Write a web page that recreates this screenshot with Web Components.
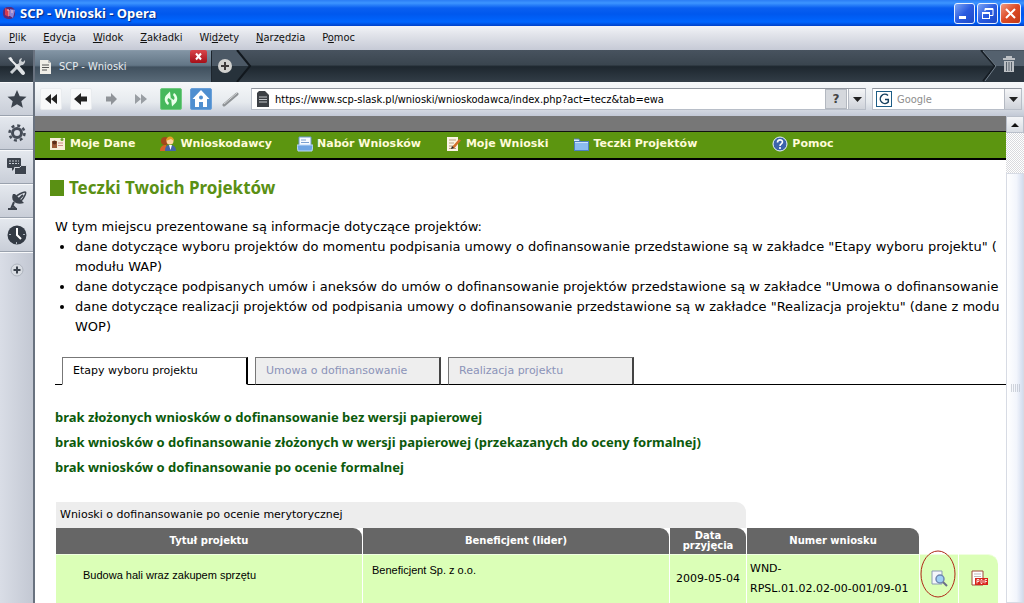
<!DOCTYPE html>
<html lang="pl">
<head>
<meta charset="utf-8">
<title>SCP - Wnioski</title>
<style>
html, body { margin: 0; height: 100%; overflow: hidden; }
body { font: 11px/16px "DejaVu Sans Condensed", "Noto Sans", sans-serif; color: #000; }
</style>
</head>
<body>
<browser-window>
  <title-bar slot="title">SCP - Wnioski - Opera</title-bar>
  <menu-bar slot="menu"></menu-bar>
  <side-panel slot="side"></side-panel>
  <tab-strip slot="tabs">SCP - Wnioski</tab-strip>
  <address-bar slot="address" url="https://www.scp-slask.pl/wnioski/wnioskodawca/index.php?act=tecz&amp;tab=ewa"></address-bar>
  <site-nav></site-nav>
  <projects-page>
    <page-tabs></page-tabs>
    <status-notes></status-notes>
    <project-table></project-table>
  </projects-page>
</browser-window>

<script>
const define = (name, css, html) => {
  const tpl = document.createElement('template');
  customElements.define(name, class extends HTMLElement {
    constructor() {
      super();
      tpl.innerHTML = `<style>:host,*{box-sizing:border-box}svg{display:block}button{font:inherit;margin:0}${css}</style>` + html(this);
      this.attachShadow({ mode: 'open' }).append(tpl.content.cloneNode(true));
    }
  });
};

define('browser-window', `
:host { display: flex; flex-direction: column; height: 100vh; overflow: hidden; background: #fff; }
.work { flex: 1; display: grid; grid-template-columns: 35px minmax(0, 1fr); min-height: 0; }
.main { display: flex; flex-direction: column; min-height: 0; min-width: 0; }
.view { flex: 1; display: flex; min-height: 0; }
.doc { flex: 1; min-width: 0; overflow: hidden; border-top: 15px solid #777; }
`, () => `
<slot name="title"></slot><slot name="menu"></slot>
<div class="work"><slot name="side"></slot>
<div class="main"><slot name="tabs"></slot><slot name="address"></slot>
<div class="view"><div class="doc"><slot></slot></div><scroll-rail></scroll-rail></div></div></div>`);

define('title-bar', `
:host { display: flex; align-items: center; gap: 3px; height: 26px; padding: 0 3px 0 2px; color: #fff;
  background: linear-gradient(#2b7df5 0, #3d95ff 3px, #0a5ff0 8px, #0058ee 14px, #0066ff 22px, #0040c8 26px);
  font: bold 13px/16px "Noto Sans", sans-serif; text-shadow: 1px 1px 1px #0a2a80; }
.name { flex: 1; }
.ctl { display: flex; gap: 2px; }
button { width: 21px; height: 21px; padding: 0; border: 1px solid #e8f0ff; border-radius: 3px; background: linear-gradient(135deg, #7ba4f5, #2a5be0 50%, #1c49c8); }
button.x { background: linear-gradient(135deg, #f09a80, #dd4a25 50%, #c03a18); }
button svg { margin: auto; }
`, () => `
<svg width="15" height="16" viewBox="0 0 15 16"><rect x="1" y="2" width="12" height="12" rx="5" fill="#5b2a78"/><path d="M3 3l4 2v7l-4-2z" fill="#d43a4f"/><path d="M8 4l5 1-2 8-3-2z" fill="#8e86d8"/><path d="M5 5h2v6M10 5v3" stroke="#f3c5d4" fill="none"/></svg>
<span class="name"><slot></slot></span>
<div class="ctl">
<button aria-label="Minimalizuj"><svg width="15" height="15"><rect x="2" y="10" width="7" height="3" fill="#fff"/></svg></button>
<button aria-label="Przywróć"><svg width="15" height="15" fill="none" stroke="#fff"><path d="M5 5V2.500h8v7h-3"/><path d="M5 3h8" stroke-width="2"/><rect x="2.500" y="6.500" width="7" height="6"/><path d="M2 7h8" stroke-width="2"/></svg></button>
<button class="x" aria-label="Zamknij"><svg width="15" height="15"><path d="M3 3l9 9M12 3l-9 9" stroke="#fff" stroke-width="2"/></svg></button>
</div>`);

define('menu-bar', `
:host { display: flex; align-items: center; gap: 17px; height: 24px; padding: 0 9px; background: linear-gradient(#f2f4f8, #e4e6ec 30%, #c6cad6); }
button { border: 0; padding: 0; background: none; color: #111; }
`, () => [['', 'P', 'lik'], ['', 'E', 'dycja'], ['', 'W', 'idok'], ['', 'Z', 'akładki'], ['Wi', 'd', 'żety'], ['', 'N', 'arzędzia'], ['P', 'o', 'moc']]
  .map(([a, u, b]) => `<button>${a}<u>${u}</u>${b}</button>`).join(''));

define('side-panel', `
:host { display: flex; flex-direction: column; background: linear-gradient(90deg, #d9dde6, #c3c8d3); border-right: 2px solid #69727f; }
button { height: 34px; width: 100%; padding: 0; border: 0; border-top: 1px solid #f8f9fb; border-bottom: 1px solid #9aa2ae; background: linear-gradient(#e4e8ee, #c9ced8); }
button.dark { height: 32px; border: 0; background: linear-gradient(#54606d, #3b4651 48%, #1f2830 52%, #36414b); }
button.plain { border-bottom: 0; background: none; }
svg { margin: auto; }
`, () => {
  const ic = s => `<svg width="20" height="20" viewBox="0 0 20 20">${s}</svg>`;
  return `
<button class="dark" aria-label="Narzędzia">${ic('<path d="M4 17L14 7" stroke="#ccd0d4" stroke-width="3"/><path d="M13 8a3.500 3.500 0 0 1 2-6l-1 3 2 1 2-2a4 4 0 0 1-5 5z" fill="#ccd0d4"/><path d="M3 3l7 7" stroke="#eceef0" stroke-width="2"/><path d="M10 10l6 7" stroke="#dfe2e5" stroke-width="4" stroke-linecap="round"/><path d="M1 2l3-1 2 3-2 1z" fill="#eceef0"/>')}</button>
<button aria-label="Zakładki">${ic('<path d="M10 1l2.700 6.200 6.800.6-5.200 4.400 1.600 6.600L10 15.300 4.100 18.800l1.600-6.600L.5 7.800l6.800-.6z" fill="#3c434d"/>')}</button>
<button aria-label="Widżety">${ic('<circle cx="10" cy="10" r="4.500" fill="none" stroke="#454c57" stroke-width="3"/><circle cx="10" cy="10" r="7.500" fill="none" stroke="#454c57" stroke-width="2.500" stroke-dasharray="3 2.890"/>')}</button>
<button aria-label="Notatki">${ic('<rect x="0" y="1" width="14" height="10" rx="1" fill="#3c434d"/><path d="M2 4h10M2 6.500h10" stroke="#c6ccd4" stroke-dasharray="2 1"/><path d="M5 11h3l-3 3z" fill="#3c434d"/><path d="M7.500 10.500h5l2-2h5v9h-12z" fill="#3c434d" stroke="#d5d9e0"/>')}</button>
<button aria-label="Transfery">${ic('<path d="M6 3c-3 6 3 12 11 9L8 3z" fill="#3c434d"/><path d="M9 6c1-2 7-5 9-5s-1 6-4 9z" fill="none" stroke="#3c434d" stroke-width="1.500"/><path d="M11 9l5-5" stroke="#3c434d" stroke-width="2"/><path d="M7 11l-3 7M1 18h9M5 14l4 4" stroke="#3c434d" stroke-width="2"/>')}</button>
<button aria-label="Historia">${ic('<circle cx="10" cy="10" r="9.500" fill="#343b45"/><path d="M10 3v7l4 4" stroke="#fff" stroke-width="2" fill="none"/><g fill="#aeb5be"><rect x="2" y="9" width="2" height="1"/><rect x="16" y="9" width="2" height="1"/><rect x="9" y="17" width="1" height="2"/></g>')}</button>
<button class="plain" aria-label="Dodaj panel">${ic('<circle cx="10" cy="10" r="6" fill="#d8dce2" stroke="#aeb4be"/><path d="M10 6.500v7M6.500 10h7" stroke="#3c434d" stroke-width="2"/>')}</button>`;
});

define('tab-strip', `
:host { display: flex; height: 32px; background: linear-gradient(#48535f, #3a454f 46%, #1e272f 52%, #323d47); }
.tab { position: relative; display: flex; align-items: center; gap: 7px; width: 177px; padding: 0 4px; color: #e8ecf0; border-right: 1px solid #1c242c; border-top: 1px solid #8899a8;
  background: linear-gradient(#8294a4, #637686 46%, #40505e 52%, #5a6b79); }
.close { position: absolute; top: -1px; right: 4px; width: 17px; height: 13px; padding: 0; border: 0; border-radius: 2px; background: linear-gradient(#d9464b, #a50f18); }
.close svg { margin: auto; }
.new, .bin { padding: 0; border: 0; background: none; }
.bin { margin-left: auto; }
`, () => `
<div class="tab"><svg width="13" height="16"><path d="M1 1h8l3 3v11H1z" fill="#f0eee8"/><path d="M9 1v3h3" fill="#bbb"/><path d="M3 6h7M3 8.500h7M3 11h5" stroke="#555"/></svg><slot></slot>
<button class="close" aria-label="Zamknij kartę"><svg width="9" height="9"><path d="M2 1.500l5 6M7 1.500l-5 6" stroke="#fff" stroke-width="2"/></svg></button></div>
<button class="new" aria-label="Nowa karta"><svg width="40" height="32"><path d="M0 0h25l13 16-13 16H0z" fill="#4b5865"/><path d="M0 16h38L25 32H0z" fill="#27323b"/><path d="M25 0l13 16-13 16" fill="none" stroke="#12181e" stroke-width="2"/><circle cx="13" cy="16" r="7" fill="#d2d2d0"/><path d="M13 12v8M9 16h8" stroke="#3d3a3a" stroke-width="2"/></svg></button>
<button class="bin" aria-label="Kosz"><svg width="44" height="32"><path d="M2 1h42v15H15z" fill="#54616e"/><path d="M15 16h29v16H3z" fill="#2c3741"/><path d="M1 0l14 16L3 31" fill="none" stroke="#161d24" stroke-width="2"/><path d="M3 1l13 15L5 31" fill="none" stroke="#75828e"/><path d="M23 8h12v2H23zM26 6h6v2h-6zM24 11h10v11H24z" fill="#bcc0c4"/><path d="M26.500 12v9M29 12v9M31.500 12v9" stroke="#59636d"/></svg></button>`);

define('address-bar', `
:host { display: flex; align-items: center; height: 34px; padding: 0 2px 0 5px; background: linear-gradient(#f6f8fa, #e6eaee 60%, #c3c9d6); }
.tool { width: 22px; height: 22px; padding: 0; border: 1px solid #e9ecef; border-radius: 2px; background: #f8f9fa; flex: none; }
.tool.flat { background: none; border-color: transparent; }
.tool.reload { background: #46b85c; border-color: #71c981; }
.tool.home { background: #4f8fd0; border-color: #6aa0d8; }
.tools { display: flex; gap: 8px; margin-right: 9px; }
.tool svg { margin: auto; }
.field { display: flex; align-items: center; height: 22px; background: #fff; border: 1px solid #b8bec8; border-top-color: #8f959e; min-width: 0; }
.url { flex: 1; padding-left: 5px; margin-right: 6px; }
.find { width: 150px; padding-left: 3px; flex: none; }
input { flex: 1; min-width: 0; border: 0; padding: 0 0 0 6px; background: none; font: inherit; color: #000; height: 20px; outline: 0; }
.find input { padding-left: 4px; }
input::placeholder { color: #8d8d8d; opacity: 1; }
.drop { width: 17px; height: 20px; padding: 0; border: 0; border-left: 1px solid #b4b9c2; background: linear-gradient(#f4f5f7, #cfd3da); }
.help { width: 22px; height: 20px; margin-right: 1px; padding: 0; border: 1px solid #b3b8c0; background: #d5d8dd; font: bold 12px/16px "DejaVu Sans", sans-serif; color: #444; text-align: center; }
.drop svg { margin: auto; }
`, host => {
  const ic = s => `<svg width="18" height="18" viewBox="0 0 18 18">${s}</svg>`;
  const arrow = '<svg width="9" height="5"><path d="M0 0h9L4.500 5z" fill="#222"/></svg>';
  return `
<div class="tools">
<button class="tool" aria-label="Początek">${ic('<path d="M9 4v10L3 9zM15 4v10L9 9z" fill="#222"/>')}</button>
<button class="tool" aria-label="Wstecz">${ic('<path d="M9 3v3.500h6v5H9V15L2 9z" fill="#222"/>')}</button>
<button class="tool flat" aria-label="Dalej">${ic('<path d="M9 3v3.500H4v5h5V15l6-6z" fill="#8f9398"/>')}</button>
<button class="tool flat" aria-label="Do przodu">${ic('<path d="M3 4v10l6-5zM9 4v10l6-5z" fill="#999ea3"/>')}</button>
<button class="tool reload" aria-label="Odśwież">${ic('<path d="M8 1.500L4 5.500C1.500 9 3 13 6 15l1-2C5 11 5 9 6.500 8L9 10z" fill="#eaffea"/><path d="M10 16.500l4-4c2.500-3.500 1-7.500-2-9.500l-1 2c2 2 2 4 .5 5L9 8z" fill="#eaffea"/>')}</button>
<button class="tool home" aria-label="Strona startowa">${ic('<path d="M9 0l8.500 9H15v8h-4v-5H7v5H3V9H.5z" fill="#fff"/><circle cx="9" cy="7.500" r="2" fill="#4f8fd0"/>')}</button>
<button class="tool flat" aria-label="Różdżka">${ic('<path d="M2 15L15 4" stroke="#8f9396" stroke-width="3" stroke-linecap="round"/><path d="M2 14L15 3" stroke="#d2d4d6"/>')}</button>
</div>
<div class="field url"><svg width="12" height="16"><path d="M2 0h6l4 4v12H0V2z" fill="#3c4045"/><path d="M2 6h8M2 8.500h8M2 11h8" stroke="#c3c6ca"/></svg>
<input aria-label="Adres" value="${host.getAttribute('url').replace(/&/g, '&amp;')}"><button class="help" aria-label="Bezpieczeństwo">?</button><button class="drop" aria-label="Lista adresów">${arrow}</button></div>
<div class="field find"><svg width="17" height="18" viewBox="0 0 17 18"><rect x=".5" y="1.500" width="15" height="15" fill="#fff" stroke="#1d5d86"/><path d="M12 5.500A4.600 4.600 0 1 0 12.300 12V9.500H9" fill="none" stroke="#16405f" stroke-width="1.500"/></svg>
<input aria-label="Szukaj" placeholder="Google"><button class="drop" aria-label="Wyszukiwarki">${arrow}</button></div>`;
});

define('scroll-rail', `
:host { display: flex; flex-direction: column; width: 18px; background: #f4f6fb; }
button { height: 17px; padding: 0; border: 1px solid #b9bfca; background: linear-gradient(#f4f5f8, #d9dde4); }
button svg { margin: auto; }
.track { height: 40px; background: repeating-conic-gradient(#d9dade 0 25%, #fff 0 50%) 0 0 / 2px 2px; }
.thumb { flex: 1; display: flex; align-items: center; justify-content: center; border: 1px solid #d7dbe4; background: linear-gradient(90deg, #fff, #f2f5fc 60%, #d3dcee); }
`, () => `<button aria-label="W górę"><svg width="8" height="4"><path d="M4 0l4 4H0z" fill="#111"/></svg></button><div class="track"></div>
<div class="thumb"><svg width="9" height="9"><path d="M0 1h9M0 3h9M0 5h9M0 7h9" stroke="#a8afbb" stroke-dasharray="1 1"/></svg></div>`);

define('site-nav', `
:host { display: flex; align-items: center; gap: 25px; height: 29px; padding: 0 15px 2px; background: #5c9510; border-top: 1px solid #111; border-bottom: 2px solid #000; font: bold 11px/16px "DejaVu Sans", sans-serif; }
a { display: flex; align-items: center; gap: 4px; color: #fffbd8; text-decoration: none; white-space: nowrap; }
a:last-child { margin-left: 50px; }
`, () => [
  ['Moje Dane', '<rect x="0" y="2" width="15" height="12" fill="#f6efd9"/><rect x="2" y="5" width="5" height="7" fill="#9b5a35"/><circle cx="4.500" cy="6.500" r="2" fill="#5b2d18"/><path d="M8 7h5M8 9.500h5" stroke="#c88"/><circle cx="12" cy="3.500" r="1.500" fill="#6ca030"/>'],
  ['Wnioskodawcy', '<circle cx="5" cy="5" r="4" fill="#a2481b"/><path d="M0 15c0-5 3-6 6-6l3 6z" fill="#d9622a"/><circle cx="10" cy="5" r="3.500" fill="#ffd3a0"/><path d="M6 5c0-6 8-6 8 0l-3-2z" fill="#e5a02a"/><path d="M5 15c0-5 2-6 5-6s6 1 6 6z" fill="#4464a8"/><path d="M9 9h3l-1.500 5z" fill="#fff"/>'],
  ['Nabór Wniosków', '<path d="M2 1h12v9H2z" fill="#f7fbff" stroke="#6c98d0"/><path d="M4 4h5M4 6.500h8" stroke="#7aa0d0"/><path d="M0 9h16l-1 6H1z" fill="#6fa5e3" stroke="#bdd8f8"/>'],
  ['Moje Wnioski', '<path d="M1 1h11v14H1z" fill="#fbf4e4"/><path d="M3 4h7M3 7h5M3 10h7M3 12.500h7" stroke="#b9a182"/><path d="M6 11l7-8 2 1.500-7 8z" fill="#d3702b"/><path d="M5 13l1-3 2 2z" fill="#222"/>'],
  ['Teczki Projektów', '<path d="M1 3h5l1 2h8v1H1z" fill="#dcecff"/><path d="M1 3h5l1 2" fill="none" stroke="#567cae"/><rect x="1.500" y="5.500" width="14" height="9" fill="#8bbcf0" stroke="#4d7fc0"/><path d="M2 6.500h13" stroke="#cfe4fb"/>'],
  ['Pomoc', '<circle cx="8" cy="8" r="7" fill="#3d64ab" stroke="#eaf2ff"/><path d="M5.500 6.500c0-3.500 5-3.300 5-.5 0 2-2.500 1.800-2.500 4M8 11v2" fill="none" stroke="#fff" stroke-width="1.600"/>']
].map(([t, s]) => `<a href="#"><svg width="16" height="16">${s}</svg>${t}</a>`).join(''));

define('projects-page', `
:host { display: block; padding: 18px 0 0 15px; font: 13px/20px "DejaVu Sans", sans-serif; }
h1 { display: flex; align-items: center; gap: 5px; margin: 0; font: bold 17px/20px "Noto Sans", sans-serif; color: #5a9014; }
h1::before { content: ""; width: 14px; height: 16px; background: #5a9014; }
.body { padding-left: 5px; }
p { margin: 19px 0 0; }
ul { margin: 0 0 20px; padding-left: 20px; white-space: nowrap; }
`, () => `
<h1>Teczki Twoich Projektów</h1>
<div class="body">
<p>W tym miejscu prezentowane są informacje dotyczące projektów:</p>
<ul>
<li>dane dotyczące wyboru projektów do momentu podpisania umowy o dofinansowanie przedstawione są w zakładce "Etapy wyboru projektu" (<br>modułu WAP)</li>
<li>dane dotyczące podpisanych umów i aneksów do umów o dofinansowanie projektów przedstawione są w zakładce "Umowa o dofinansowanie</li>
<li>dane dotyczące realizacji projektów od podpisania umowy o dofinansowanie przedstawione są w zakładce "Realizacja projektu" (dane z modu<br>WOP)</li>
</ul>
<slot></slot></div>`);

define('page-tabs', `
:host { display: flex; gap: 7px; padding-left: 7px; background: linear-gradient(#000, #000) bottom / 100% 1px no-repeat; font: 11px/16px "DejaVu Sans", sans-serif; }
button { width: 186px; height: 28px; padding: 0 10px; text-align: left; border: 1px solid #777; border-right: 2px solid #444; border-bottom-color: #000; background: #eee; color: #8b93b8; }
button.on { background: #fff; color: #000; border-right-color: #000; border-bottom-color: #fff; }
`, () => `<button class="on">Etapy wyboru projektu</button><button>Umowa o dofinansowanie</button><button>Realizacja projektu</button>`);

define('status-notes', `
:host { display: block; padding: 20px 0 22px; font: bold 13px/25px "Noto Sans", sans-serif; color: #0c5a0c; }
p { margin: 0; }
`, () => `<p>brak złożonych wniosków o dofinansowanie bez wersji papierowej</p>
<p>brak wniosków o dofinansowanie złożonych w wersji papierowej (przekazanych do oceny formalnej)</p>
<p>brak wniosków o dofinansowanie po ocenie formalnej</p>`);

define('project-table', `
:host { display: block; }
table { border-collapse: separate; border-spacing: 1px 0; table-layout: fixed; width: 944px; font: 11px/20px "DejaVu Sans", sans-serif; }
th, td { padding: 0; }
.group { height: 26px; padding-left: 4px; text-align: left; font-weight: normal; background: #ededed; border-radius: 0 10px 0 0; }
.head th { height: 26px; background: #666; color: #fff; font: bold 10px/10px "DejaVu Sans", sans-serif; border-radius: 0 9px 0 0; }
.row td { height: 50px; padding-bottom: 2px; background: #dbffb7; border-top: 1px solid #f0ffe0; vertical-align: middle; }
.row td.name, .row td.who { font: 11px/16px "Liberation Sans", sans-serif; vertical-align: top; }
.row td.name { padding: 12px 0 0 27px; }
.row td.who { padding: 7px 0 0 9px; }
.row td.date { text-align: center; }
.row td.num { padding-left: 3px; }
.row td:last-child { border-radius: 0 10px 0 0; }
.icon { position: relative; }
.icon a { display: block; width: 16px; margin: auto; }
.ring { position: absolute; left: 0; top: -5px; }
`, () => `
<table>
<colgroup><col style="width:306px"><col style="width:306px"><col style="width:76px"><col style="width:172px"><col style="width:38px"><col style="width:39px"></colgroup>
<tr><th class="group" colspan="3">Wnioski o dofinansowanie po ocenie merytorycznej</th></tr>
<tr class="head"><th>Tytuł projektu</th><th>Beneficjent (lider)</th><th>Data<br>przyjęcia</th><th>Numer wniosku</th></tr>
<tr class="row"><td class="name">Budowa hali wraz zakupem sprzętu</td><td class="who">Beneficjent Sp. z o.o.</td><td class="date">2009-05-04</td><td class="num">WND-<br>RPSL.01.02.02-00-001/09-01</td>
<td class="icon"><a href="#" aria-label="Podgląd"><svg width="17" height="17"><path d="M1 1h10v13H1z" fill="#f4f6fb" stroke="#8b9cb4"/><circle cx="9" cy="9" r="4" fill="#9fd0f5" stroke="#6f87b0" stroke-width="1.500"/><path d="M12 12l4 4" stroke="#6a6f88" stroke-width="2"/></svg></a>
<svg class="ring" width="37" height="48"><ellipse cx="18" cy="24" rx="17" ry="23" fill="none" stroke="#b02818"/></svg></td>
<td class="icon"><a href="#" aria-label="PDF"><svg width="17" height="17"><path d="M1 1h11v14H1z" fill="#fff" stroke="#a0483c"/><path d="M3 4h7M3 6.500h7" stroke="#bbb"/><rect x="4" y="8" width="13" height="7" fill="#d8241a"/><path d="M6 13.500v-4h2v2H6M10 9.500v4h1l1-1v-2l-1-1zM14 13.500v-4h2M14 11.500h2" fill="none" stroke="#fff" stroke-width=".8"/></svg></a></td></tr>
</table>`);
</script>
</body>
</html>
